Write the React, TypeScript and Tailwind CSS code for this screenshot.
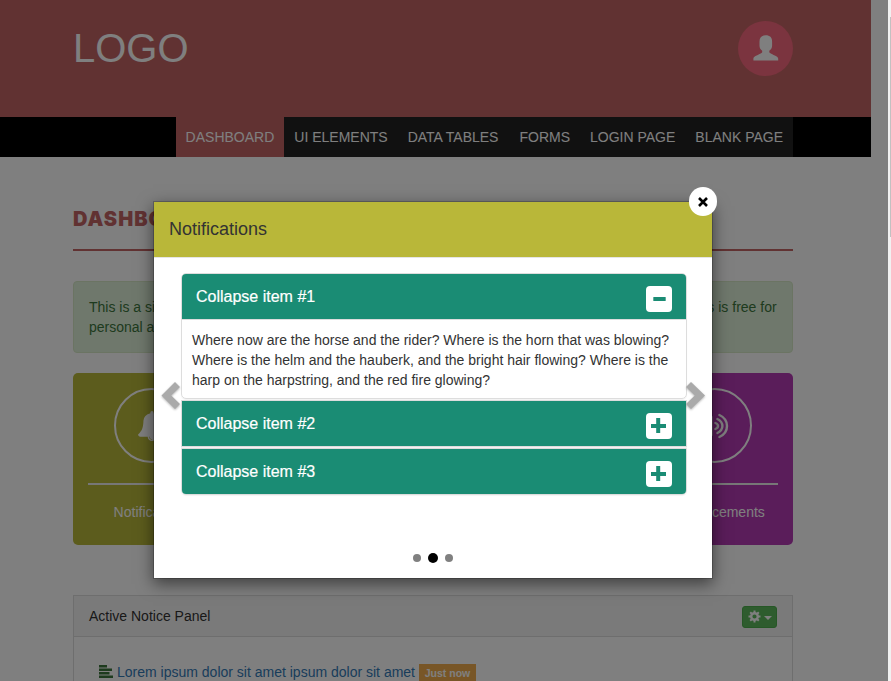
import React from "react";

const navItems = ["DASHBOARD", "UI ELEMENTS", "DATA TABLES", "FORMS", "LOGIN PAGE", "BLANK PAGE"];

function UserIcon() {
  return (
    <svg width="26" height="26" viewBox="0 0 26 26" fill="#fff" className="mb-[2px]">
      <path d="M12.7 0.3C8.5 0.3 6.5 2.5 6.5 6.5V10.8C6.5 13 7.6 14.6 9.2 15.8V17.3C8.6 18.6 4 20 1.5 21.8C0.6 22.5 0.4 23 0.4 24V25.4H25.2V24C25.2 23 24.8 22.5 24 21.8C21.4 20 16.9 18.6 16.3 17.3V15.8C17.9 14.6 19.1 13 19.1 10.8V6.5C19.1 2.5 16.9 0.3 12.7 0.3Z" />
    </svg>
  );
}

function BellIcon() {
  return (
    <svg width="30" height="30" viewBox="0 0 1792 1792" fill="#fff">
      <path d="M912 1696q0-16-16-16-59 0-101.5-42.5t-42.5-101.5q0-16-16-16t-16 16q0 73 51.5 124.5t124.5 51.5q16 0 16-16zM1728 1408q0 52-38 90t-90 38h-448q0 106-75 181t-181 75-181-75-75-181h-448q-52 0-90-38t-38-90q50-42 91-88t85-119.5 74.5-158.5 50-206 19.5-260q0-152 117-282.5t307-158.5q-8-19-8-39 0-40 28-68t68-28 68 28 28 68q0 20-8 39 190 28 307 158.5t117 282.5q0 139 19.5 260t50 206 74.5 158.5 85 119.5 91 88z" />
    </svg>
  );
}

function VolumeIcon() {
  return (
    <svg width="30" height="30" viewBox="0 0 30 30" fill="none" stroke="#fff" strokeWidth="2.4" strokeLinecap="round">
      <path d="M1 11H6L12 5.2H13.6V24.8H12L6 19H1Z" fill="#fff" stroke="none" />
      <path d="M16.4 12Q19 13 19 15T16.4 18" />
      <path d="M18.4 8Q23.4 10.6 23.4 15T18.4 22" />
      <path d="M20.4 4Q28 7.6 28 15T20.4 26" />
    </svg>
  );
}

function Card({ color, label, children }: { color: string; label: string; children?: React.ReactNode }) {
  return (
    <div className={`flex h-[172px] flex-1 flex-col items-center rounded-[5px] px-[15px] pt-[15px] text-white ${color}`}>
      <div className="flex size-[75px] shrink-0 items-center justify-center rounded-full border-2 border-white">{children}</div>
      <div className="mt-5 h-0.5 w-full shrink-0 bg-[#eee]" />
      <div className="mt-[17px] leading-5">{label}</div>
    </div>
  );
}

function Toggle({ open }: { open: boolean }) {
  return (
    <span className="mt-px flex size-[26px] items-center justify-center rounded bg-white">
      <svg width="16" height="16" viewBox="0 0 16 16" fill="#1a8c74">
        {open ? (
          <rect x="2.3" y="6" width="12.4" height="4" rx="0.5" />
        ) : (
          <path d="M5.2 0H9.2V6H15V10H9.2V15H5.2V10H0V6H5.2Z" />
        )}
      </svg>
    </span>
  );
}

function Heading({ title, open, round }: { title: string; open: boolean; round: string }) {
  return (
    <div className={`flex h-[45px] items-start justify-between bg-[#1a8c74] pr-3.5 pl-3.5 text-base leading-[18px] font-medium text-white [-webkit-text-stroke:0.2px_#fff] ${round}`}>
      <span className="pt-[14px]">{title}</span>
      <span className="pt-[11px]">
        <Toggle open={open} />
      </span>
    </div>
  );
}

function Page() {
  return (
    <div className="h-[681px] w-[888px] overflow-hidden bg-white">
      <div className="w-[871px]">
        <header className="h-[117px] bg-[#c36464] pr-[78px] pl-[73px]">
          <div className="flex items-start justify-between">
            <div className="pt-[25px] text-[40px] leading-[46px] text-white">LOGO</div>
            <div className="mt-[21px] flex size-[55px] items-center justify-center rounded-full bg-[#f6687e]">
              <UserIcon />
            </div>
          </div>
        </header>
        <nav className="flex h-10 justify-end bg-black pr-[78px]">
          {navItems.map((item, i) => (
            <div key={item} className={`pl-[10px] leading-10 whitespace-nowrap text-white ${i === 2 ? "pr-[11px]" : "pr-[10px]"} ${i === 0 ? "bg-[#c36464]" : "bg-[#222]"}`}>
              {item}
            </div>
          ))}
        </nav>
        <main className="pr-[78px] pl-[73px]">
          <h1 className="h-[94px] border-b-2 border-[#c36464] pt-[48px] font-[Inter,sans-serif] text-[20px] leading-[28px] font-black tracking-[1px] text-[#c36464]">
            DASHBOARD
          </h1>
          <div className="mt-[30px] h-[72px] rounded border border-[#d6e9c6] bg-[#dff0d8] p-[15px] leading-5 text-[#3c763d]">
            This is a simple admin template that can be used for your small project or may be large projects. This is free for personal and commercial use.
          </div>
          <div className="mt-5 flex gap-[30px]">
            <Card color="bg-[#b9b93a]" label="Notifications"><BellIcon /></Card>
            <Card color="bg-[#1a8c74]" label="Messages" />
            <Card color="bg-[#c36464]" label="Settings" />
            <Card color="bg-[#b53ab5]" label="Announcements"><VolumeIcon /></Card>
          </div>
          <section className="mt-[50px] h-[200px] border border-[#ddd]">
            <div className="flex h-[41px] items-center justify-between border-b border-[#ddd] bg-[#f5f5f5] px-[15px] text-[#333]">
              <span>Active Notice Panel</span>
              <span className="mt-0.5 flex h-[22px] w-[35px] items-center justify-center gap-[3px] rounded-[3px] border border-[#4cae4c] bg-[#5cb85c]">
                <svg width="13" height="13" viewBox="0 0 13 13" className="mb-[2px]">
                  <circle cx="6.5" cy="6.5" r="3.3" fill="none" stroke="#fff" strokeWidth="2.4" />
                  <path d="M6.5 .5V3M6.5 10V12.5M.5 6.5H3M10 6.5H12.5M2.2 2.2L4 4M9 9L10.8 10.8M10.8 2.2L9 4M4 9L2.2 10.8" stroke="#fff" strokeWidth="2" />
                </svg>
                <svg width="8" height="4" viewBox="0 0 8 4" className="mt-[2px]"><path d="M0 0H8L4 4Z" fill="#fff" /></svg>
              </span>
            </div>
            <div className="flex items-center pt-[24px] pl-[25px] leading-5 text-[#337ab7]">
              <svg width="14" height="13" viewBox="0 0 14 13" fill="#3c763d">
                <path d="M0 0H8V2.6H0ZM0 3.5H13V6.1H0ZM0 7H10.5V9.5H0ZM0 10.4H14V13H0Z" />
              </svg>
              <span className="ml-1">Lorem ipsum dolor sit amet ipsum dolor sit amet</span>
              <span className="mt-[3px] ml-1 h-[18px] w-[57px] bg-[#f0ad4e] text-center text-[10.5px] leading-[18px] font-bold text-white">Just now</span>
            </div>
          </section>
        </main>
      </div>
    </div>
  );
}

function Chevron({ flip }: { flip?: boolean }) {
  return (
    <svg width="20" height="30" viewBox="0 0 20 30" className={`absolute top-[179px] overflow-visible drop-shadow-[0_1px_1px_rgba(0,0,0,0.3)] ${flip ? "left-[532px]" : "left-[7px]"}`}>
      <path d={flip ? "M0 6L5 1L19 14.5L5 28L0 23L8.8 14.5Z" : "M19 6L14 1L0.5 14.5L14 28L19 23L10.2 14.5Z"} fill="#aaa" />
    </svg>
  );
}

function Modal() {
  return (
    <div className="absolute top-[201px] left-[153px] h-[378px] w-[560px] border border-black/20 bg-white bg-clip-padding shadow-[0_5px_15px_rgba(0,0,0,0.5)]">
      <div className="h-14 border-b border-[#e5e5e5] bg-[#b9b739] pt-[14px] pl-[15px] text-[18px] leading-[26px] text-[#333]">Notifications</div>
      <div className="ml-[27px] flex w-[506px] flex-col gap-px pt-[15px] text-[#333]">
        <div className="h-[126px] rounded-[5px] border border-[#ddd] shadow-[0_1px_1px_rgba(0,0,0,0.05)]">
          <Heading title="Collapse item #1" open round="rounded-t" />
          <div className="border-t border-[#ddd] px-[10px] pt-[10px] leading-5">
            <p>Where now are the horse and the rider? Where is the horn that was blowing? Where is the helm and the hauberk, and the bright hair flowing? Where is the harp on the harpstring, and the red fire glowing?</p>
          </div>
        </div>
        <div className="h-[47px] border border-[#ddd] shadow-[0_1px_1px_rgba(0,0,0,0.05)]">
          <Heading title="Collapse item #2" open={false} round="rounded-none" />
        </div>
        <div className="h-[47px] rounded-b-[5px] border border-[#ddd] shadow-[0_1px_1px_rgba(0,0,0,0.05)]">
          <Heading title="Collapse item #3" open={false} round="rounded-b" />
        </div>
      </div>
      <div className="mt-[58px] flex h-[10px] items-center justify-center gap-[7px]">
        <span className="size-2 rounded-full bg-[#808080]" />
        <span className="size-[10px] rounded-full bg-black" />
        <span className="size-2 rounded-full bg-[#808080]" />
      </div>
      <Chevron />
      <Chevron flip />
      <button className="absolute top-[-15px] left-[535px] flex h-[29px] w-7 items-center justify-center rounded-full bg-white">
        <svg width="10" height="10" viewBox="0 0 10 10"><path d="M1 1L9 9M9 1L1 9" stroke="#000" strokeWidth="2.6" /></svg>
      </button>
    </div>
  );
}

export default function App() {
  return (
    <div className="relative flex h-[681px] w-[891px] overflow-hidden bg-[#f1f1f1] font-['Liberation_Sans',Arial,sans-serif] text-[14px]">
      <Page />
      <div className="absolute inset-y-0 left-0 w-[888px] bg-black/50" />
      <div className="mt-[17px] ml-0.5 h-[220px] w-px bg-[#c1c1c1]" />
      <Modal />
    </div>
  );
}
